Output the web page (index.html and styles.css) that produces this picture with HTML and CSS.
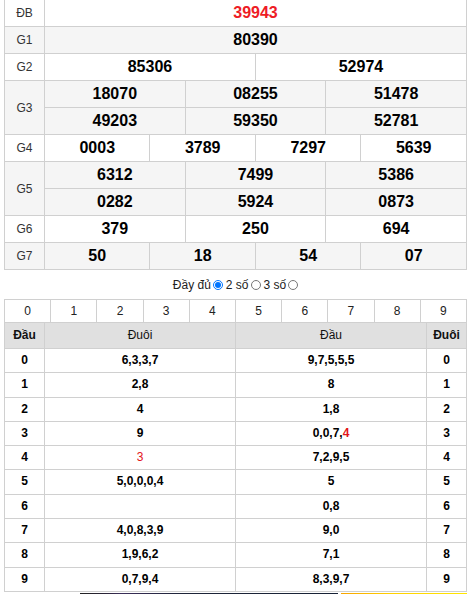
FILE: index.html
```html
<!DOCTYPE html>
<html lang="vi">
<head>
<meta charset="utf-8">
<title>Kết quả xổ số</title>
<link rel="stylesheet" href="styles.css">
</head>
<body>
<div class="page">
  <table class="kq">
    <colgroup>
      <col class="c-label">
      <col><col><col><col><col><col><col><col><col><col><col><col>
    </colgroup>
    <tbody>
      <tr class="white"><td class="lbl">ĐB</td><td colspan="12" class="num db">39943</td></tr>
      <tr class="gray"><td class="lbl">G1</td><td colspan="12" class="num">80390</td></tr>
      <tr class="white"><td class="lbl">G2</td><td colspan="6" class="num">85306</td><td colspan="6" class="num">52974</td></tr>
      <tr class="gray"><td class="lbl" rowspan="2">G3</td><td colspan="4" class="num">18070</td><td colspan="4" class="num">08255</td><td colspan="4" class="num">51478</td></tr>
      <tr class="gray"><td colspan="4" class="num">49203</td><td colspan="4" class="num">59350</td><td colspan="4" class="num">52781</td></tr>
      <tr class="white"><td class="lbl">G4</td><td colspan="3" class="num">0003</td><td colspan="3" class="num">3789</td><td colspan="3" class="num">7297</td><td colspan="3" class="num">5639</td></tr>
      <tr class="gray"><td class="lbl" rowspan="2">G5</td><td colspan="4" class="num">6312</td><td colspan="4" class="num">7499</td><td colspan="4" class="num">5386</td></tr>
      <tr class="gray"><td colspan="4" class="num">0282</td><td colspan="4" class="num">5924</td><td colspan="4" class="num">0873</td></tr>
      <tr class="white"><td class="lbl">G6</td><td colspan="4" class="num">379</td><td colspan="4" class="num">250</td><td colspan="4" class="num">694</td></tr>
      <tr class="gray"><td class="lbl">G7</td><td colspan="3" class="num">50</td><td colspan="3" class="num">18</td><td colspan="3" class="num">54</td><td colspan="3" class="num">07</td></tr>
    </tbody>
  </table>

  <div class="opts">
    <label class="opt">Đầy đủ <input type="radio" name="mode" checked></label>
    <label class="opt">2 số <input type="radio" name="mode"></label>
    <label class="opt">3 số <input type="radio" name="mode"></label>
  </div>

  <table class="digits">
    <tbody>
      <tr><td>0</td><td>1</td><td>2</td><td>3</td><td>4</td><td>5</td><td>6</td><td>7</td><td>8</td><td>9</td></tr>
    </tbody>
  </table>
  <table class="lt">
    <colgroup><col class="c-edge"><col><col><col class="c-edge"></colgroup>
    <thead>
      <tr><th class="b">Đầu</th><th>Đuôi</th><th>Đầu</th><th class="b">Đuôi</th></tr>
    </thead>
    <tbody>
      <tr><td>0</td><td>6,3,3,7</td><td>9,7,5,5,5</td><td>0</td></tr>
      <tr><td>1</td><td>2,8</td><td>8</td><td>1</td></tr>
      <tr><td>2</td><td>4</td><td>1,8</td><td>2</td></tr>
      <tr><td>3</td><td>9</td><td>0,0,7,<span class="red">4</span></td><td>3</td></tr>
      <tr><td>4</td><td><span class="red thin">3</span></td><td>7,2,9,5</td><td>4</td></tr>
      <tr><td>5</td><td>5,0,0,0,4</td><td>5</td><td>5</td></tr>
      <tr><td>6</td><td></td><td>0,8</td><td>6</td></tr>
      <tr><td>7</td><td>4,0,8,3,9</td><td>9,0</td><td>7</td></tr>
      <tr><td>8</td><td>1,9,6,2</td><td>7,1</td><td>8</td></tr>
      <tr><td>9</td><td>0,7,9,4</td><td>8,3,9,7</td><td>9</td></tr>
    </tbody>
  </table>

  <div class="banner">
    <div class="b-space"></div>
    <div class="b-dark"></div>
    <div class="b-yellow"></div>
  </div>
</div>
</body>
</html>
```

FILE: styles.css
```css
html, body {
  margin: 0;
  padding: 0;
  background: #fff;
}
body {
  font-family: "Liberation Sans", Arial, sans-serif;
  color: #000;
}
.page {
  padding: 0 4px;
}
table {
  width: 100%;
  border-collapse: collapse;
  table-layout: fixed;
}
td, th {
  border: 1px solid #d0d0d0;
  padding: 0;
  text-align: center;
  white-space: nowrap;
}

/* Prize table */
.kq {
  margin-top: -1px;
}
.kq .c-label { width: 40px; }
.kq td {
  line-height: 26px;
  height: 26px;
}
.kq tr.white td { background: #fff; }
.kq tr.gray td { background: #f5f5f5; }
.kq .lbl {
  font-size: 12px;
  color: #333;
}
.kq .num {
  font-size: 16px;
  font-weight: bold;
  color: #000;
}
.kq .db {
  color: #ee1c25;
}

/* options */
.opts {
  display: flex;
  justify-content: center;
  align-items: center;
  gap: 3px;
  height: 29px;
  font-size: 12px;
  color: #222;
}
.opt {
  display: flex;
  align-items: center;
  gap: 2px;
}
.opt input {
  width: 10px;
  height: 10px;
  margin: 0;
}

/* digits row */
.digits td {
  font-size: 12px;
  color: #222;
  line-height: 22px;
  height: 22px;
  border-bottom: 0;
}

/* loto table */
.lt .c-edge { width: 40px; }
.lt th {
  background: #e0e0e0;
  font-size: 12px;
  font-weight: normal;
  line-height: 25px;
  height: 25px;
  color: #111;
}
.lt th.b { font-weight: bold; }
.lt td {
  font-size: 12px;
  font-weight: bold;
  line-height: 23.3px;
  height: 23.3px;
}
.red { color: #e3151a; }
.thin { font-weight: normal; }

/* ad banner peeking at bottom */
.banner {
  display: flex;
  height: 20px;
  margin-top: 1px;
}
.b-space { width: 77px; }
.b-dark {
  width: 260px;
  background: linear-gradient(90deg, #222 0%, #2a2438 10%, #3b2f5a 16%, #1d2438 40%, #172236 100%);
}
.b-yellow {
  width: 127px;
  margin-left: 3px;
  background: linear-gradient(90deg, #f6a400 0%, #ffd000 40%, #ffe600 100%);
}
```
